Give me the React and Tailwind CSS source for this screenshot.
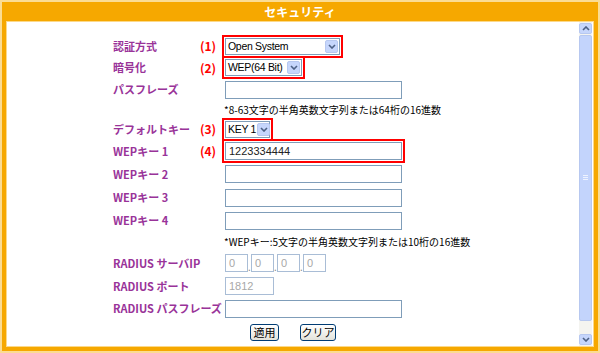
import React from 'react'

const FONT = { fontFamily: '"Noto Sans CJK JP", "Liberation Sans", sans-serif' }
const UI_FONT = { fontFamily: '"Liberation Sans", "Noto Sans CJK JP", sans-serif' }

function Chevron({ up = false }) {
  return (
    <svg width="8" height="5" viewBox="0 0 8 5" className={up ? 'rotate-180' : ''}>
      <path d="M1 1 L4 4 L7 1" fill="none" stroke="#4d6185" strokeWidth="1.6" />
    </svg>
  )
}

function Select({ value, width }) {
  return (
    <div className={`flex h-[17px] items-center border border-[#7f9db9] bg-white ${width}`}>
      <span className="flex-1 whitespace-nowrap pl-[2px] text-[10.5px] leading-none tracking-[-0.3px] text-black" style={UI_FONT}>
        {value}
      </span>
      <span className="m-[1px] flex h-[13px] w-[13px] shrink-0 items-center justify-center rounded-[2px] border border-[#b7c8f0] bg-[#c6d6fc]">
        <Chevron />
      </span>
    </div>
  )
}

function Input({ value = '', width = 'w-[177px]', disabled = false }) {
  return (
    <div
      className={`flex h-[18px] items-center whitespace-nowrap border bg-white pl-[3px] text-[11px] leading-none ${width} ${
        disabled ? 'border-[#a9bdd6] text-[#a8a8a8]' : 'border-[#7f9db9] text-[#222]'
      }`}
      style={UI_FONT}
    >
      {value}
    </div>
  )
}

function Mark({ children, className = '' }) {
  return <div className={`border-2 border-[#ff0000] p-[1px] ${className}`}>{children}</div>
}

function Row({ label, num, h, children }) {
  return (
    <div className={`flex items-center ${h}`}>
      <div className="w-[87px] whitespace-nowrap text-[11px] font-bold text-[#993399]" style={FONT}>
        {label}
      </div>
      <div className="w-[22px] text-[12px] font-bold text-[#ff0000]" style={FONT}>{num}</div>
      <div className="flex items-center">{children}</div>
    </div>
  )
}

function Note({ children, h }) {
  return (
    <div className={`flex items-center whitespace-nowrap pl-[111px] text-[10px] text-black ${h}`} style={FONT}>
      {children}
    </div>
  )
}

function XpButton({ children, width }) {
  return (
    <div
      className={`flex h-[17px] items-center justify-center rounded-[3px] border border-[#003c74] bg-gradient-to-b from-white to-[#e3e3db] text-[11px] text-black ${width}`}
      style={FONT}
    >
      {children}
    </div>
  )
}

function Scrollbar() {
  return (
    <div className="flex w-[13px] flex-col bg-[#f4f4f0] py-[1px]">
      <div className="flex h-[11px] items-center justify-center rounded-[2px] border border-[#b7c8f0] bg-[#c6d6fc]">
        <Chevron up />
      </div>
      <div className="relative mt-[1px] h-[286px] rounded-[2px] border border-[#b7c8f0] bg-[#c3d4fc]">
        <div className="absolute left-[3px] top-[139px] flex w-[5px] flex-col gap-[1px]">
          <div className="h-[1px] bg-[#eef3ff]" />
          <div className="h-[1px] bg-[#eef3ff]" />
          <div className="h-[1px] bg-[#eef3ff]" />
        </div>
      </div>
      <div className="flex-1" />
      <div className="flex h-[11px] items-center justify-center rounded-[2px] border border-[#b7c8f0] bg-[#c6d6fc]">
        <Chevron />
      </div>
    </div>
  )
}

export default function App() {
  return (
    <div className="h-[353px] w-[600px] bg-[#fbdc93] p-[2px]">
      <div className="flex h-full flex-col bg-[#f6a800] px-[4px] pb-[4px]">
        <div className="flex h-[19px] items-center justify-center text-[12px] font-bold text-white" style={FONT}>
          セキュリティ
        </div>
        <div className="flex flex-1 border border-[#fcd98a] bg-white">
          <div className="flex flex-1 flex-col pl-[106px] pt-[13px]">
            <Row label="認証方式" num="(1)" h="h-[22px]">
              <Mark>
                <Select value="Open System" width="w-[115px]" />
              </Mark>
            </Row>
            <Row label="暗号化" num="(2)" h="h-[21px]">
              <Mark>
                <Select value="WEP(64 Bit)" width="w-[77px]" />
              </Mark>
            </Row>
            <Row label="パスフレーズ" h="h-[23px]">
              <div className="pl-[3px]"><Input /></div>
            </Row>
            <Note h="h-[17px]">*8-63文字の半角英数文字列または64桁の16進数</Note>
            <Row label="デフォルトキー" num="(3)" h="h-[22px]">
              <Mark>
                <Select value="KEY 1" width="w-[45px]" />
              </Mark>
            </Row>
            <Row label="WEPキー 1" num="(4)" h="h-[22px]">
              <Mark className="pr-[1px]">
                <Input value="1223334444" />
              </Mark>
            </Row>
            <Row label="WEPキー 2" h="h-[24px]">
              <div className="pl-[3px]"><Input /></div>
            </Row>
            <Row label="WEPキー 3" h="h-[23px]">
              <div className="pl-[3px]"><Input /></div>
            </Row>
            <Row label="WEPキー 4" h="h-[23px]">
              <div className="pl-[3px]"><Input /></div>
            </Row>
            <Note h="h-[19px]">*WEPキー:5文字の半角英数文字列または10桁の16進数</Note>
            <Row label="RADIUS サーバIP" h="h-[24px]">
              <div className="flex items-end pl-[3px]">
                <Input value="0" width="w-[23px]" disabled />
                <span className="w-[3px] text-[10px] leading-none text-[#888]">.</span>
                <Input value="0" width="w-[23px]" disabled />
                <span className="w-[3px] text-[10px] leading-none text-[#888]">.</span>
                <Input value="0" width="w-[23px]" disabled />
                <span className="w-[3px] text-[10px] leading-none text-[#888]">.</span>
                <Input value="0" width="w-[23px]" disabled />
              </div>
            </Row>
            <Row label="RADIUS ポート" h="h-[22px]">
              <div className="pl-[3px]"><Input value="1812" width="w-[49px]" disabled /></div>
            </Row>
            <Row label="RADIUS パスフレーズ" h="h-[23px]">
              <div className="pl-[3px]"><Input /></div>
            </Row>
            <div className="-ml-[106px] flex h-[24px] items-center justify-center gap-[21px]">
              <XpButton width="w-[29px]">適用</XpButton>
              <XpButton width="w-[36px]">クリア</XpButton>
            </div>
          </div>
          <Scrollbar />
          <div className="w-[1px]" />
        </div>
      </div>
    </div>
  )
}
